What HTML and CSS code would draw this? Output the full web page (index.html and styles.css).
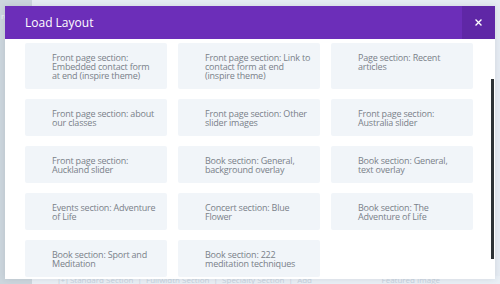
FILE: index.html
```html
<!DOCTYPE html>
<html>
<head>
<meta charset="utf-8">
<link rel="stylesheet" href="styles.css">
</head>
<body>
<div class="backdrop">
  <div class="side"><span class="side-text">rd</span></div>
  <div class="main">
    <div class="main-top"></div>
    <div class="main-bottom">
      <span class="faint">[+] Standard Section &nbsp;|&nbsp; Fullwidth Section &nbsp;|&nbsp; Specialty Section &nbsp;|&nbsp; Add</span>
      <span class="faint feat">Featured Image</span>
    </div>
  </div>
</div>
<div class="modal">
  <div class="modal-header">
    <h1 class="modal-title">Load Layout</h1>
    <button class="modal-close" aria-label="Close">
      <svg width="7" height="7" viewBox="0 0 7 7"><path d="M1 1L6 6M6 1L1 6" stroke="#fff" stroke-width="1.3" stroke-linecap="square"/></svg>
    </button>
  </div>
  <div class="modal-body">
    <div class="grid">
      <div class="card">Front page section: Embedded contact form at end (inspire theme)</div>
      <div class="card">Front page section: Link to contact form at end (inspire theme)</div>
      <div class="card">Page section: Recent articles</div>
      <div class="card">Front page section: about our classes</div>
      <div class="card">Front page section: Other slider images</div>
      <div class="card">Front page section: Australia slider</div>
      <div class="card">Front page section: Auckland slider</div>
      <div class="card">Book section: General, background overlay</div>
      <div class="card">Book section: General, text overlay</div>
      <div class="card">Events section: Adventure of Life</div>
      <div class="card">Concert section: Blue Flower</div>
      <div class="card">Book section: The Adventure of Life</div>
      <div class="card">Book section: Sport and Meditation</div>
      <div class="card">Book section: 222 meditation techniques</div>
    </div>
    <div class="scrollbar"></div>
  </div>
</div>
</body>
</html>
```
FILE: styles.css
```css
* { box-sizing: border-box; }
html, body { margin: 0; padding: 0; }
body {
  width: 500px;
  height: 284px;
  overflow: hidden;
  position: relative;
  font-family: "Open Sans", "Liberation Sans", sans-serif;
}
.backdrop {
  display: flex;
  width: 500px;
  height: 284px;
  background: #e3e9ef;
}
.side {
  width: 32px;
  background: #ccd6dd;
  color: #f4f7f9;
  font-size: 8px;
  padding: 10px 0 0 1px;
}
.main {
  flex: 1;
  display: flex;
  flex-direction: column;
  background: #e6ecf3;
}
.main-top { flex: 1; }
.main-bottom {
  height: 8px;
  display: flex;
  justify-content: space-between;
  padding: 0 60px 0 26px;
  font-size: 8px;
  line-height: 8px;
  background: #e9eff5;
}
.faint { color: #c6d2dd; }
.modal {
  position: absolute;
  top: 6px;
  left: 5px;
  width: 490px;
  height: 273px;
  background: #fff;
  box-shadow: 0 0 6px rgba(40, 50, 70, 0.12);
  display: flex;
  flex-direction: column;
  overflow: hidden;
}
.modal-header {
  height: 33px;
  background: #6c2eb9;
  display: flex;
  align-items: center;
  justify-content: space-between;
  flex-shrink: 0;
}
.modal-title {
  margin: 0 0 0 20px;
  color: #fff;
  font-size: 12px;
  font-weight: 400;
  line-height: 14px;
}
.modal-close {
  width: 33px;
  height: 33px;
  border: 0;
  padding: 0;
  background: #5f27a6;
  display: flex;
  align-items: center;
  justify-content: center;
}
.modal-body {
  position: relative;
  flex: 1;
  overflow: hidden;
}
.grid {
  display: grid;
  grid-template-columns: repeat(3, 142px);
  column-gap: 11px;
  row-gap: 10px;
  padding: 4px 0 0 20px;
}
.card {
  background: #f1f5f9;
  border-radius: 2px;
  padding: 10px 8px 9px 27px;
  color: #7a8189;
  font-size: 9px;
  line-height: 9px;
  letter-spacing: -0.2px;
  min-height: 37px;
}
.scrollbar {
  position: absolute;
  right: 1px;
  top: 40px;
  width: 3px;
  height: 180px;
  background: #2e3336;
}
```
